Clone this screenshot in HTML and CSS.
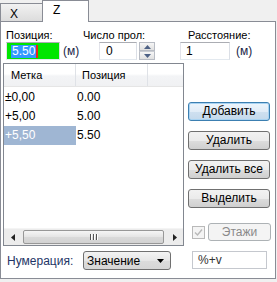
FILE: index.html
```html
<!DOCTYPE html>
<html>
<head>
<meta charset="utf-8">
<link rel="stylesheet" href="styles.css">
</head>
<body>
<div class="tabs">
  <div class="tab">X</div>
  <div class="tab active">Z</div>
</div>
<div class="panel">
  <div class="fields">
    <div class="field f1">
      <div class="lbl">Позиция:</div>
      <div class="ctl">
        <div class="input green"><span class="sel">5.50</span><span class="caret"></span></div>
        <span class="unit">(м)</span>
      </div>
    </div>
    <div class="field f2">
      <div class="lbl">Число прол:</div>
      <div class="ctl ctl2">
        <div class="input spinbox">0</div>
        <div class="spin">
          <div class="sbtn"><svg width="7" height="4" viewBox="0 0 7 4"><path d="M0 4 L3.5 0 L7 4 Z" fill="#4d6185"/></svg></div>
          <div class="sbtn"><svg width="7" height="4" viewBox="0 0 7 4"><path d="M0 0 L3.5 4 L7 0 Z" fill="#4d6185"/></svg></div>
        </div>
      </div>
    </div>
    <div class="field f3">
      <div class="lbl lbl3">Расстояние:</div>
      <div class="ctl">
        <div class="input dist">1</div>
        <span class="unit unit3">(м)</span>
      </div>
    </div>
  </div>

  <div class="grid">
    <div class="list">
      <div class="hdr">
        <div class="hc c1">Метка</div>
        <div class="hc c2">Позиция</div>
        <div class="hc c3"></div>
      </div>
      <div class="rows">
        <div class="row"><div class="c1 cell">±0,00</div><div class="c2 cell">0.00</div></div>
        <div class="row"><div class="c1 cell">+5,00</div><div class="c2 cell">5.00</div></div>
        <div class="row"><div class="c1 cell selected">+5,50</div><div class="c2 cell">5.50</div></div>
      </div>
      <div class="hscroll">
        <div class="arr"><svg width="4" height="7" viewBox="0 0 4 7"><path d="M4 0 L0 3.5 L4 7 Z" fill="#222"/></svg></div>
        <div class="track"><div class="thumb"><span class="grip"></span><span class="grip"></span><span class="grip"></span></div></div>
        <div class="arr"><svg width="4" height="7" viewBox="0 0 4 7"><path d="M0 0 L4 3.5 L0 7 Z" fill="#222"/></svg></div>
      </div>
    </div>

    <div class="side">
      <div class="btn default">Добавить</div>
      <div class="btn">Удалить</div>
      <div class="btn">Удалить все</div>
      <div class="btn">Выделить</div>
      <div class="floors">
        <div class="chk"><svg width="9" height="9" viewBox="0 0 9 9"><path d="M1 4.5 L3.5 7 L8 1.5" fill="none" stroke="#b8b8b8" stroke-width="1.4"/></svg></div>
        <div class="btn disabled">Этажи</div>
      </div>
    </div>

    <div class="numbering">
      <span class="nlbl">Нумерация:</span>
      <div class="combo"><span>Значение</span><svg width="7" height="4" viewBox="0 0 7 4"><path d="M0 0 L7 0 L3.5 4 Z" fill="#000"/></svg></div>
    </div>
    <div class="fmt-cell">
      <div class="input fmt">%+v</div>
    </div>
  </div>
</div>
</body>
</html>
```

FILE: styles.css
```css
html, body {
  margin: 0;
  padding: 0;
}
body {
  width: 277px;
  height: 282px;
  overflow: hidden;
  background: #f0f0f0;
  font-family: "Liberation Sans", Arial, sans-serif;
  font-size: 11px;
  color: #000;
}

.tabs {
  display: flex;
  align-items: flex-end;
  height: 21px;
}
.tab {
  box-sizing: border-box;
  width: 43px;
  height: 18px;
  border: 1px solid #898c95;
  border-bottom: none;
  background: linear-gradient(#f2f2f2, #dcdcdc);
  padding: 4px 0 0 9px;
  font-size: 12px;
  line-height: 12px;
}
.tab.active {
  position: relative;
  z-index: 1;
  width: 47px;
  height: 22px;
  margin-left: -1px;
  margin-bottom: -1px;
  background: #fff;
  padding: 3px 0 0 10px;
}

.panel {
  box-sizing: border-box;
  width: 276px;
  height: 258px;
  border: 1px solid #898c95;
  background: #fff;
}

.fields {
  display: flex;
  padding: 5px 0 0 5px;
}
.field { display: flex; flex-direction: column; }
.f1 { width: 77px; }
.f2 { width: 97px; }
.f3 { width: 95px; }
.lbl {
  height: 14px;
  line-height: 14px;
  padding-top: 1px;
  white-space: nowrap;
}
.lbl3 { padding-left: 8px; }
.ctl { display: flex; align-items: center; }
.ctl2 { padding-left: 16px; }

.input {
  box-sizing: border-box;
  height: 18px;
  border: 1px solid #abadb3;
  border-color: #abadb3 #dbdfe6 #e3e9ef #e2e3ea;
  background: #fff;
  padding: 0 0 0 4px;
  line-height: 16px;
  font-size: 12px;
  display: flex;
  align-items: center;
}
.green {
  width: 54px;
  background: #00e600;
  padding-left: 4px;
}
.sel {
  background: #3399ff;
  color: #fff;
  line-height: 13px;
  padding: 0 1px;
}
.caret {
  width: 2px;
  height: 13px;
  background: #e8261e;
}
.unit {
  margin-left: 3px;
  color: #1a2448;
  font-size: 12px;
}
.unit3 { margin-left: 6px; }
.spinbox { width: 38px; padding-left: 6px; }
.spin {
  margin-left: 2px;
  display: flex;
  flex-direction: column;
  gap: 0;
}
.sbtn {
  box-sizing: border-box;
  width: 16px;
  height: 9px;
  border: 1px solid #b8bcc4;
  background: linear-gradient(#f6f6f6, #e0e0e0);
  display: flex;
  align-items: center;
  justify-content: center;
}
.sbtn + .sbtn { border-top-color: #c9ccd2; }
.dist { width: 50px; padding-left: 5px; }

.grid {
  display: grid;
  grid-template-columns: 181px 1fr;
  grid-template-rows: 183px auto;
  margin: 3px 0 0 2px;
}

.list {
  box-sizing: border-box;
  border: 1px solid #828790;
  display: flex;
  flex-direction: column;
}
.hdr {
  display: flex;
  height: 23px;
  box-sizing: border-box;
  border-bottom: 1px solid #e5e5e5;
  background: linear-gradient(#ffffff 0%, #ffffff 45%, #f3f4f6 55%, #f0f1f3 100%);
}
.hc {
  box-sizing: border-box;
  line-height: 22px;
  font-size: 11px;
}
.c1 { width: 72px; }
.c2 { width: 72px; }
.hdr .c1 { padding-left: 7px; border-right: 1px solid #dfe2e7; }
.hdr .c2 { padding-left: 6px; border-right: 1px solid #dfe2e7; }
.hc.c3 { flex: 1; }

.rows {
  flex: 1;
  padding-top: 1px;
}
.row {
  display: flex;
  height: 19px;
}
.cell {
  box-sizing: border-box;
  line-height: 19px;
  font-size: 12px;
  padding-left: 1px;
}
.c2.cell { padding-left: 1px; }
.selected {
  background: #9fb6d3;
  color: #fff;
}

.hscroll {
  display: flex;
  height: 17px;
  background: #ececec;
  border-top: 1px solid #f4f4f4;
  box-sizing: border-box;
}
.arr {
  width: 17px;
  display: flex;
  align-items: center;
  justify-content: center;
}
.track {
  flex: 1;
  padding: 1px 2px;
  display: flex;
}
.thumb {
  flex: 1;
  box-sizing: border-box;
  border: 1px solid #979797;
  border-radius: 2px;
  background: linear-gradient(#f5f5f5, #e4e4e4 50%, #d9d9d9 51%, #d2d2d2);
  display: flex;
  align-items: center;
  justify-content: center;
  gap: 1px;
}
.grip {
  width: 1px;
  height: 6px;
  background: #555;
  border-right: 1px solid #fff;
}

.side {
  display: flex;
  flex-direction: column;
  padding: 39px 0 0 4px;
  gap: 10px;
}
.btn {
  box-sizing: border-box;
  width: 82px;
  height: 19px;
  border: 1px solid #707070;
  border-radius: 3px;
  background: linear-gradient(#f2f2f2 0%, #ebebeb 50%, #dddddd 51%, #cfcfcf 100%);
  text-align: center;
  line-height: 17px;
  font-size: 12px;
}
.btn.default {
  border-color: #3c7fb1;
  background: linear-gradient(#edf5fc 0%, #e1ecf7 50%, #cfe0f0 51%, #c4d9ec 100%);
  box-shadow: inset 0 0 0 1px #a9d3f2;
}
.floors {
  display: flex;
  align-items: center;
  margin-top: 5px;
  padding-left: 4px;
}
.chk {
  box-sizing: border-box;
  width: 13px;
  height: 13px;
  border: 1px solid #b9b9b9;
  background: #f4f4f4;
  display: flex;
  align-items: center;
  justify-content: center;
}
.btn.disabled {
  width: 63px;
  height: 18px;
  margin-left: 3px;
  border-color: #adb2b5;
  background: #f4f4f4;
  color: #8a8a8a;
}

.numbering {
  display: flex;
  align-items: center;
  padding: 5px 0 0 4px;
}
.nlbl {
  width: 76px;
  color: #1e3566;
  font-size: 12px;
}
.combo {
  box-sizing: border-box;
  width: 88px;
  height: 19px;
  border: 1px solid #707070;
  border-radius: 3px;
  background: linear-gradient(#f3f3f3, #e6e6e6 50%, #dcdcdc 51%, #d6d6d6);
  display: flex;
  align-items: center;
  justify-content: space-between;
  padding: 0 6px 0 3px;
  font-size: 12px;
}
.fmt-cell {
  padding: 5px 0 0 8px;
}
.input.fmt {
  width: 75px;
  height: 18px;
  border-color: #c5c8ce;
  color: #333;
  padding-left: 5px;
}
```
